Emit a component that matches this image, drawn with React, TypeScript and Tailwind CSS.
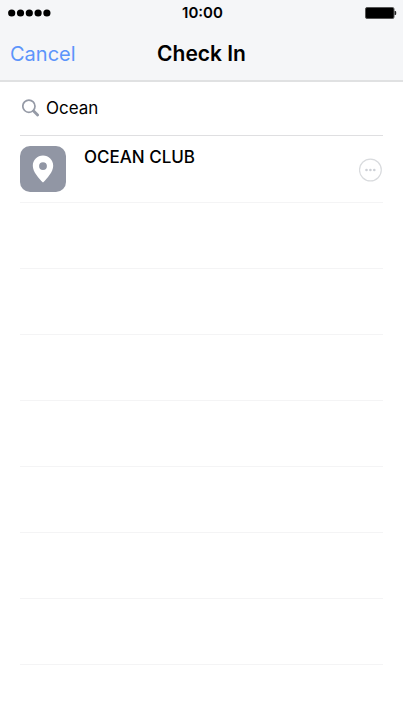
import React from "react";

const signalDots = [0, 1, 2, 3, 4];
const emptyRows = [0, 1, 2, 3, 4, 5, 6];

function SignalIcon() {
  return (
    <svg width="44" height="8" viewBox="0 0 44 8" aria-hidden="true">
      {signalDots.map((i) => (
        <circle key={i} cx={3.7 + i * 8.8} cy="4" r="3.6" fill="#000" />
      ))}
    </svg>
  );
}

function BatteryIcon() {
  return (
    <svg width="32" height="12" viewBox="0 0 32 12" aria-hidden="true">
      <rect x="0.5" y="0.5" width="28.5" height="11" rx="1.5" fill="#000" stroke="#555" />
      <path d="M29.6 4h.6q1 0 1 1v2q0 1-1 1h-.6z" fill="#222" />
    </svg>
  );
}

function SearchIcon() {
  return (
    <svg width="18" height="18" viewBox="0 0 18 18" fill="none" stroke="#959aa6" aria-hidden="true">
      <circle cx="6.9" cy="7.2" r="6.1" strokeWidth="1.7" />
      <path d="M11.6 12l4 4.100" strokeWidth="2.8" strokeLinecap="round" />
    </svg>
  );
}

function PinIcon() {
  return (
    <svg width="22" height="28" viewBox="0 0 22 28" aria-hidden="true">
      <path
        fillRule="evenodd"
        fill="#fff"
        d="M11 .6C5.3.6.8 5.1.8 10.7c0 6.2 6 12.5 10.2 16.9 4.2-4.4 10.2-10.7 10.2-16.9C21.2 5.1 16.7.6 11 .6zM11 7.2a3.9 3.9 0 1 1 0 7.8 3.9 3.9 0 0 1 0-7.8z"
      />
    </svg>
  );
}

function MoreIcon() {
  return (
    <svg width="24" height="24" viewBox="0 0 24 24" aria-hidden="true">
      <circle cx="11.4" cy="12" r="10.9" fill="none" stroke="#d9dbde" strokeWidth="1.2" />
      <circle cx="7.5" cy="12" r="1.3" fill="#cdd0d6" />
      <circle cx="11.4" cy="12" r="1.3" fill="#cdd0d6" />
      <circle cx="15.3" cy="12" r="1.3" fill="#cdd0d6" />
    </svg>
  );
}

export default function App() {
  return (
    <div className="min-h-screen bg-white font-['Inter','Liberation_Sans',sans-serif] text-black">
      <header className="border-b-2 border-[#e0e1e2] bg-[#f5f6f8]">
        <div className="grid h-[26px] grid-cols-3 items-center pr-[6px] pl-2">
          <SignalIcon />
          <time className="text-center text-[15px] font-semibold">10:00</time>
          <span className="justify-self-end">
            <BatteryIcon />
          </span>
        </div>
        <div className="grid h-[54px] grid-cols-[1fr_auto_1fr] items-center px-[10px] pt-px">
          <button type="button" className="justify-self-start text-xl text-[#5c94fb]">
            Cancel
          </button>
          <h1 className="text-[21px] font-semibold">Check In</h1>
        </div>
      </header>

      <main className="px-5">
        <div className="flex h-[54px] items-center gap-[6px] border-b border-[#dfdfe1] pb-[2px] pl-[2px]">
          <SearchIcon />
          <input
            type="text"
            aria-label="Search places"
            defaultValue="Ocean"
            className="h-8 min-w-0 flex-1 bg-transparent text-[17px] leading-8 outline-none"
          />
        </div>

        <ul>
          <li className="flex h-[67px] items-start border-b border-[#f4f4f5] pt-[10px]">
            <span className="flex size-[46px] items-center justify-center rounded-[10px] bg-[#9196a4]">
              <PinIcon />
            </span>
            <span className="ml-[18px] flex-1 text-[17px] leading-[22px] font-medium">OCEAN CLUB</span>
            <button type="button" aria-label="More" className="mt-3">
              <MoreIcon />
            </button>
          </li>
          {emptyRows.map((i) => (
            <li key={i} className="h-[66px] border-b border-[#f4f4f5]" />
          ))}
        </ul>
      </main>
    </div>
  );
}
